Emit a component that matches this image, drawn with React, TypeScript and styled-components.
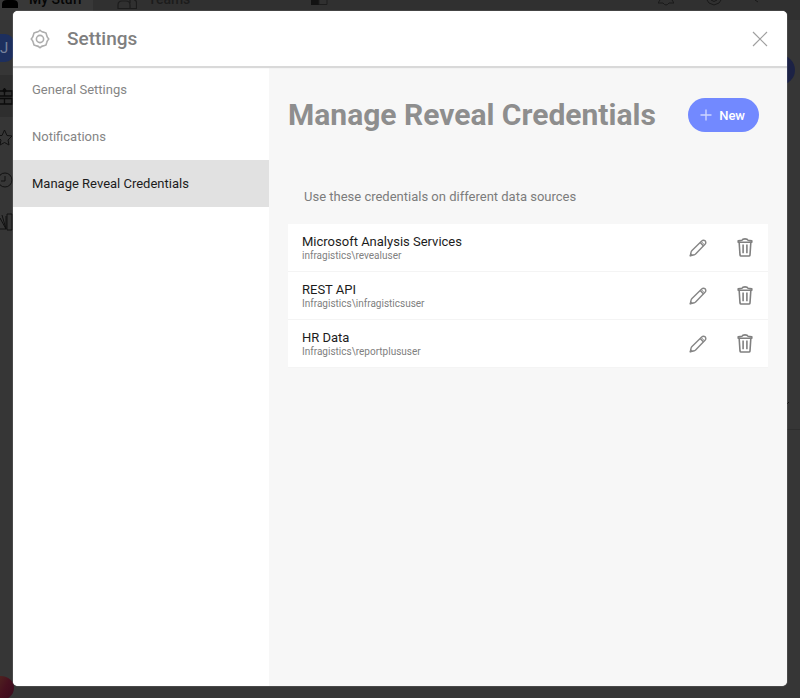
import React from "react";
import styled, { createGlobalStyle } from "styled-components";

const GlobalStyle = createGlobalStyle`
  * { box-sizing: border-box; }
  body { margin: 0; background: #363636; font-family: Roboto, "Liberation Sans", sans-serif; }
  button { font: inherit; border: 0; padding: 0; background: none; cursor: pointer; }
  svg { display: block; flex: none; }
`;

const Page = styled.div`
  position: relative;
  display: flex;
  flex-direction: column;
  height: 100vh;
  overflow: hidden;
`;

const TopBar = styled.header`
  display: flex;
  justify-content: space-between;
  height: 20px;
  background: #303030;
`;

const TopTabs = styled.div`
  display: flex;
`;

const TopTab = styled.div<{ $active?: boolean }>`
  display: flex;
  gap: 11px;
  width: ${(p) => (p.$active ? 93 : 200)}px;
  padding-left: ${(p) => (p.$active ? 2 : 24)}px;
  background: ${(p) => (p.$active ? "#383838" : "transparent")};
  color: ${(p) => (p.$active ? "#050505" : "#1c1c1c")};
  font-size: 14px;
  font-weight: 500;
  line-height: 16px;
`;

const TabLabel = styled.span`
  margin-top: -9px;
`;

const TopIcons = styled.div`
  display: flex;
  gap: 32px;
  padding-right: 38px;
`;

const Body = styled.div`
  display: flex;
  flex: 1;
  justify-content: space-between;
`;

const Rail = styled.nav`
  display: flex;
  flex-direction: column;
  justify-content: space-between;
  width: 14px;
  padding-top: 14px;
  overflow: hidden;
`;

const RailGroup = styled.div`
  display: flex;
  flex-direction: column;
`;

const Avatar = styled.div`
  width: 14px;
  height: 28px;
  border-radius: 0 9px 9px 0;
  background: #1d2f5e;
  color: #77819b;
  font-size: 15px;
  line-height: 28px;
`;

const RailItem = styled.div<{ $active?: boolean }>`
  display: flex;
  align-items: center;
  height: 42px;
  background: ${(p) => (p.$active ? "#2e2e2e" : "transparent")};
`;

const RailItems = styled.div`
  margin-top: 13px;
`;

const Orb = styled.div`
  width: 26px;
  height: 24px;
  margin-left: -12px;
  margin-bottom: -2px;
  border-radius: 50%;
  background: linear-gradient(120deg, #55331f, #47101f 60%, #380a1c);
`;

const RightEdge = styled.div`
  display: flex;
  flex-direction: column;
  width: 200px;
`;

const RightPanel = styled.div`
  display: flex;
  flex-direction: column;
  align-items: flex-start;
  justify-content: space-between;
  height: 410px;
  padding: 35px 10px 22px 0;
  border-bottom: 1px solid #2e2e2e;
`;

const RoundAction = styled.div`
  width: 195px;
  height: 30px;
  margin-right: -10px;
  border-radius: 15px;
  background: #1c2245;
`;

const PanelArrow = styled.svg`
  align-self: flex-end;
`;

const Overlay = styled.div`
  position: absolute;
  inset: 0;
  display: flex;
  padding: 11px 13px 12px;
`;

const Dialog = styled.section`
  display: flex;
  flex: 1;
  flex-direction: column;
  overflow: hidden;
  border-radius: 5px;
  background: #f7f7f7;
  box-shadow: 0 0 1px #ffffff;
`;

const DialogHeader = styled.header`
  position: relative;
  display: flex;
  align-items: center;
  gap: 17px;
  height: 55px;
  padding: 0 19px 0 17px;
  background: #ffffff;
  box-shadow: 0 2px 1px #d9d9d9;
`;

const DialogTitle = styled.h1`
  flex: 1;
  margin: 0;
  color: #7f7f7f;
  font-size: 19px;
  font-weight: 500;
  line-height: 24px;
`;

const Columns = styled.div`
  display: flex;
  flex: 1;
`;

const Sidebar = styled.nav`
  display: flex;
  flex-direction: column;
  width: 256px;
  background: #ffffff;
`;

const SidebarItem = styled.button<{ $active?: boolean }>`
  height: 47px;
  padding-left: 19px;
  background: ${(p) => (p.$active ? "#e1e1e1" : "#ffffff")};
  color: ${(p) => (p.$active ? "#1c1c1c" : "#858585")};
  font-size: 13px;
  text-align: left;
`;

const Content = styled.main`
  flex: 1;
  padding: 28px 19px 0;
`;

const Heading = styled.div`
  display: flex;
  align-items: center;
  justify-content: space-between;
  height: 42px;
  padding-right: 9px;
`;

const ContentTitle = styled.h2`
  margin: 0;
  color: #8e8e8e;
  font-size: 30px;
  font-weight: 700;
  line-height: 36px;
  white-space: nowrap;
`;

const NewButton = styled.button`
  display: flex;
  align-items: center;
  gap: 7px;
  height: 34px;
  padding: 0 14px 0 12px;
  border-radius: 17px;
  background: #7289ff;
  color: #ffffff;
  font-size: 13px;
  font-weight: 500;
`;

const Hint = styled.p`
  margin: 53px 0 19px;
  padding-left: 16px;
  color: #7c7c7c;
  font-size: 13px;
  line-height: 16px;
`;

const CredentialList = styled.ul`
  margin: 0;
  padding: 0;
  list-style: none;
`;

const Credential = styled.li`
  display: flex;
  align-items: center;
  height: 48px;
  padding: 0 15px 0 14px;
  border-bottom: 1px solid #f4f4f4;
  background: #ffffff;
`;

const CredentialText = styled.div`
  flex: 1;
`;

const CredentialName = styled.div`
  color: #1c1c1c;
  font-size: 13px;
  line-height: 16px;
`;

const CredentialUser = styled.div`
  color: #808080;
  font-size: 10px;
  line-height: 12px;
`;

const Actions = styled.div`
  display: flex;
  align-items: center;
  gap: 30px;
`;

const GearIcon = () => (
  <svg width="20" height="20" viewBox="0 0 20 20" fill="none" stroke="#adadad" strokeWidth="1.6" strokeLinejoin="round">
    <path d="M10 1.2Q11.8 3 13.2 3.1L16 3.9 16.8 6.8Q17.2 8.4 18.8 10 17.2 11.6 16.8 13.2L16 16.1 13.2 16.9Q11.8 17 10 18.8 8.2 17 6.8 16.9L4 16.1 3.2 13.2Q2.8 11.6 1.2 10 2.8 8.4 3.2 6.8L4 3.9 6.8 3.1Q8.2 3 10 1.2Z" />
    <circle cx="10" cy="10" r="3.6" />
  </svg>
);

const CloseIcon = () => (
  <svg width="16" height="16" viewBox="0 0 16 16" stroke="#a0a0a0" strokeWidth="1.2">
    <path d="M1 1 15 15M15 1 1 15" />
  </svg>
);

const PlusIcon = () => (
  <svg width="12" height="12" viewBox="0 0 12 12" stroke="#cdd5ff" strokeWidth="1.4">
    <path d="M6 .5V11.5M.5 6H11.5" />
  </svg>
);

const PencilIcon = () => (
  <svg width="18" height="18" viewBox="0 0 18 18" fill="none" stroke="#868686" strokeWidth="1.4" strokeLinejoin="round">
    <path d="M1.2 16.8 2.2 12.6Q2.4 12 3 11.4L12.7 2Q14.4.5 16.2 1.9 17.5 3.6 16 5.3L6.6 15Q6 15.6 5.3 15.8Z" />
    <path d="M11.2 3.6 14.5 6.9" />
    <path d="M12.3 2.6 15.4 5.8" strokeWidth="1" />
    <path d="M1.2 16.8 1.8 14.6 3.4 16.2Z" fill="#868686" strokeWidth="1" />
  </svg>
);

const TrashIcon = () => (
  <svg width="16" height="19" viewBox="0 0 16 19" fill="none" stroke="#808080" strokeWidth="1.6" strokeLinejoin="round" strokeLinecap="round">
    <path d="M1.2 4.3V2.8L5 2.2Q5.5.9 8 .9T11 2.2L14.8 2.8V4.3ZM2.2 4.8 3 17Q3.2 18 4 18H12Q12.8 18 13 17L13.8 4.8" />
    <path d="M6.1 6.5V15.2M9.9 6.5V15.2" strokeLinecap="butt" />
  </svg>
);

const navigation = ["General Settings", "Notifications", "Manage Reveal Credentials"];

const credentials = [
  { name: "Microsoft Analysis Services", user: "infragistics\\revealuser" },
  { name: "REST API", user: "Infragistics\\infragisticsuser" },
  { name: "HR Data", user: "Infragistics\\reportplususer" },
];

const Workspace = () => (
  <>
    <TopBar>
      <TopTabs>
        <TopTab $active>
          <svg width="16" height="8" viewBox="0 0 16 8"><path d="M0 8V4Q0 0 5 0H11Q16 0 16 4V8Z" fill="#000" /></svg>
          <TabLabel>My Stuff</TabLabel>
        </TopTab>
        <TopTab>
          <svg width="20" height="10" viewBox="0 0 20 10" fill="none" stroke="#1c1c1c" strokeWidth="1.2"><path d="M1 8.5V5Q1 1 5 1H9Q13 1 13 5V8.5ZM13 8.5H19.5V3Q19.5 0 17 0M13 3V0" /></svg>
          <TabLabel>Teams</TabLabel>
        </TopTab>
        <svg width="40" height="5" viewBox="0 0 40 5"><path d="M18 0H26V5H18Z" fill="#121212" /><path d="M26 0V4.5H34V0" fill="none" stroke="#1c1c1c" /></svg>
      </TopTabs>
      <TopIcons>
        <svg width="16" height="7" viewBox="0 0 16 7" fill="none" stroke="#191919"><path d="M2 0 0 3H5Q8 7 11 3H16L14 0" /></svg>
        <svg width="16" height="7" viewBox="0 0 16 7" fill="none" stroke="#191919"><path d="M1 0 3 3 8 5 13 3 15 0M5 0Q8 3 11 0" /></svg>
        <svg width="8" height="7" viewBox="0 0 8 7" stroke="#191919"><path d="M1 0 4 2" /></svg>
      </TopIcons>
    </TopBar>
    <Body>
      <Rail>
        <RailGroup>
          <Avatar>J</Avatar>
          <RailItems>
            <RailItem $active><svg width="13" height="20" viewBox="0 0 13 20" fill="none" stroke="#0b0b0b" strokeWidth="1.3"><path d="M0 5H12V10H0M0 12.5H12V18H0M4.5 2V10M4.5 12V18" /><circle cx="4.5" cy="4.5" r="1.3" fill="#0b0b0b" /></svg></RailItem>
            <RailItem><svg width="13" height="18" viewBox="0 0 13 18" fill="none" stroke="#111"><path d="M-7 6.5H2L4.5 1 7 6.5 12 7 8 11 9 16 4.5 13.5 0 16 1 11-3 7" /></svg></RailItem>
            <RailItem><svg width="13" height="18" viewBox="0 0 13 18" fill="none" stroke="#111"><circle cx="5" cy="9" r="7" /><path d="M5 5V10H1" /></svg></RailItem>
            <RailItem><svg width="13" height="18" viewBox="0 0 13 18" fill="none" stroke="#111"><path d="M0 5 6 16M2 2 6 16V3M7 1H12V17H7ZM0 16H6" /></svg></RailItem>
          </RailItems>
        </RailGroup>
        <Orb />
      </Rail>
      <RightEdge>
        <RightPanel>
          <RoundAction />
          <PanelArrow width="6" height="6" viewBox="0 0 6 6" fill="none" stroke="#111"><path d="M1 4.5 3 3 5 1" /></PanelArrow>
        </RightPanel>
      </RightEdge>
    </Body>
  </>
);

export default function App() {
  return (
    <>
      <GlobalStyle />
      <Page>
        <Workspace />
        <Overlay>
          <Dialog role="dialog" aria-modal="true" aria-labelledby="settings-title">
            <DialogHeader>
              <GearIcon />
              <DialogTitle id="settings-title">Settings</DialogTitle>
              <button aria-label="Close"><CloseIcon /></button>
            </DialogHeader>
            <Columns>
              <Sidebar aria-label="Settings sections">
                {navigation.map((label, index) => (
                  <SidebarItem key={label} $active={index === 2} aria-current={index === 2 ? "page" : undefined}>
                    {label}
                  </SidebarItem>
                ))}
              </Sidebar>
              <Content>
                <Heading>
                  <ContentTitle>Manage Reveal Credentials</ContentTitle>
                  <NewButton><PlusIcon />New</NewButton>
                </Heading>
                <Hint>Use these credentials on different data sources</Hint>
                <CredentialList>
                  {credentials.map(({ name, user }) => (
                    <Credential key={name}>
                      <CredentialText>
                        <CredentialName>{name}</CredentialName>
                        <CredentialUser>{user}</CredentialUser>
                      </CredentialText>
                      <Actions>
                        <button aria-label={`Edit ${name}`}><PencilIcon /></button>
                        <button aria-label={`Delete ${name}`}><TrashIcon /></button>
                      </Actions>
                    </Credential>
                  ))}
                </CredentialList>
              </Content>
            </Columns>
          </Dialog>
        </Overlay>
      </Page>
    </>
  );
}
